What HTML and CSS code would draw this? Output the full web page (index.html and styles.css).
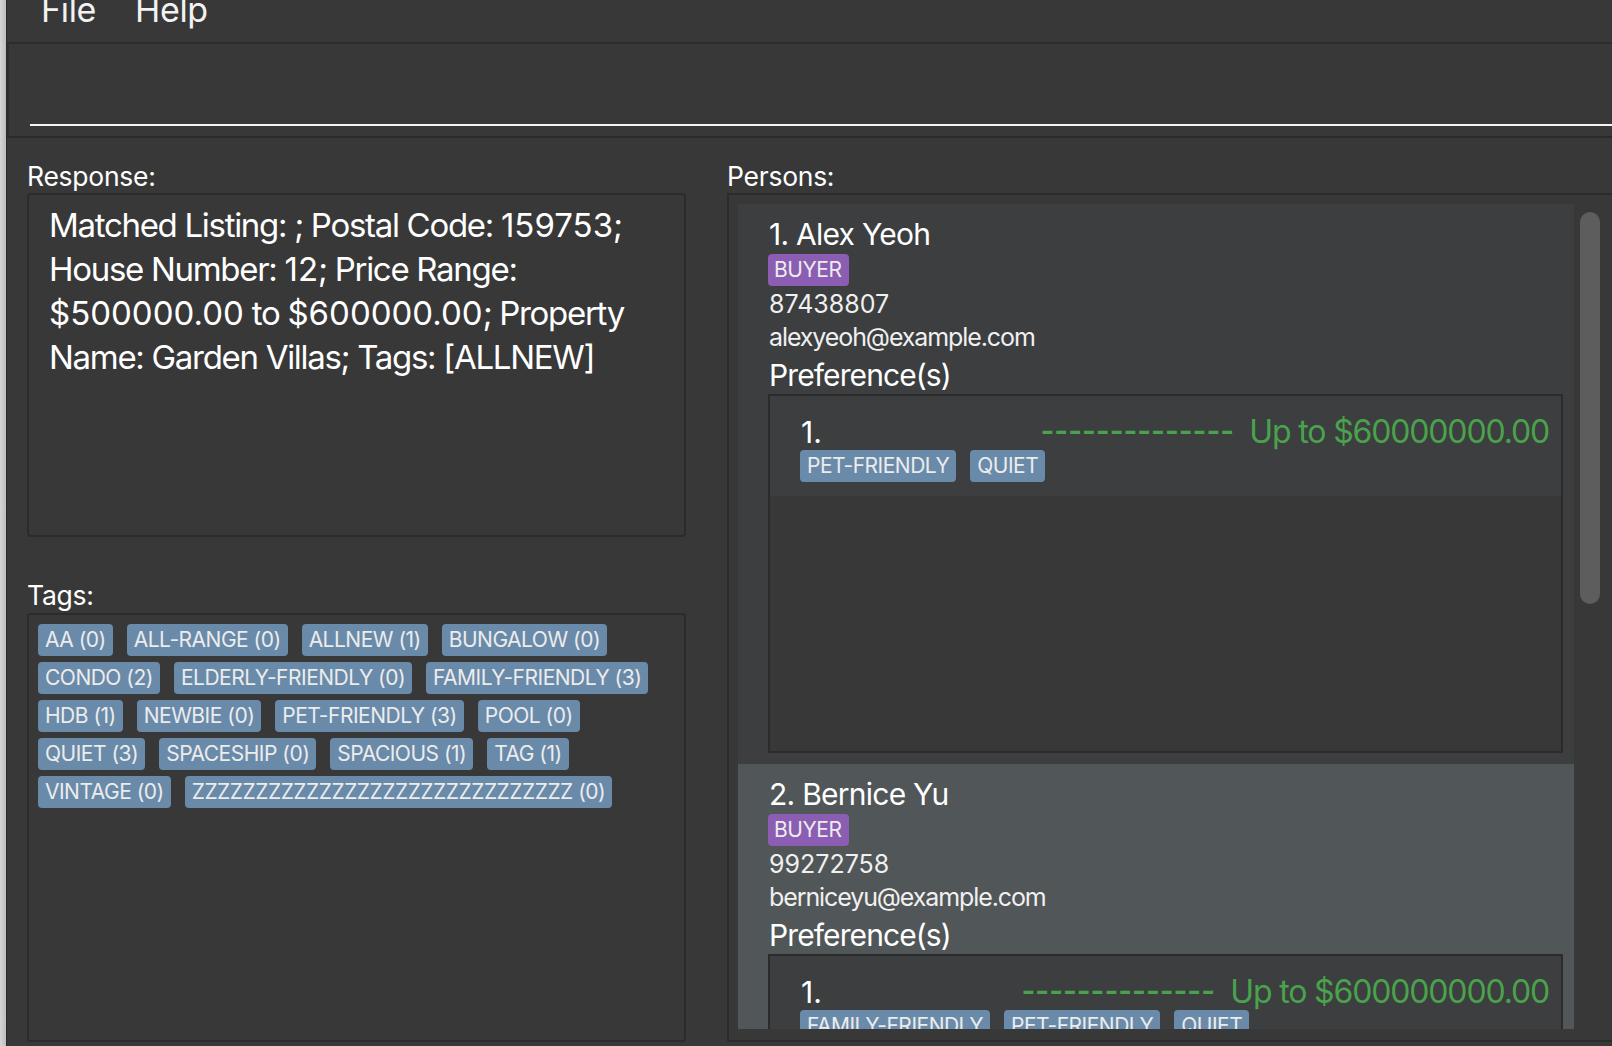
FILE: index.html
```html
<!DOCTYPE html>
<html lang="en">
<head>
<meta charset="utf-8">
<title>Address Book</title>
<link rel="stylesheet" href="styles.css">
</head>
<body>
<div class="app">
  <div class="edge"></div>
  <div class="window">
    <div class="menubar">
      <span class="menu-item">File</span>
      <span class="menu-item">Help</span>
    </div>
    <div class="command">
      <div class="command-input"></div>
    </div>
    <div class="main">
      <div class="left">
        <div class="pane-label">Response:</div>
        <div class="result-box">
          <div class="result-text">Matched Listing: ; Postal Code: <span class="num">159753</span>;<br>House Number: <span class="num">12</span>; Price Range:<br><span class="num">$500000.00</span> to <span class="num">$600000.00</span>; Property<br>Name: Garden Villas; Tags: [ALLNEW]</div>
        </div>
        <div class="pane-label tags-label">Tags:</div>
        <div class="tags-box">
          <div class="tag-row">
            <span class="chip">AA (0)</span>
            <span class="chip">ALL-RANGE (0)</span>
            <span class="chip">ALLNEW (1)</span>
            <span class="chip">BUNGALOW (0)</span>
          </div>
          <div class="tag-row">
            <span class="chip">CONDO (2)</span>
            <span class="chip">ELDERLY-FRIENDLY (0)</span>
            <span class="chip">FAMILY-FRIENDLY (3)</span>
          </div>
          <div class="tag-row">
            <span class="chip">HDB (1)</span>
            <span class="chip">NEWBIE (0)</span>
            <span class="chip">PET-FRIENDLY (3)</span>
            <span class="chip">POOL (0)</span>
          </div>
          <div class="tag-row">
            <span class="chip">QUIET (3)</span>
            <span class="chip">SPACESHIP (0)</span>
            <span class="chip">SPACIOUS (1)</span>
            <span class="chip">TAG (1)</span>
          </div>
          <div class="tag-row">
            <span class="chip">VINTAGE (0)</span>
            <span class="chip">ZZZZZZZZZZZZZZZZZZZZZZZZZZZZZZ (0)</span>
          </div>
        </div>
      </div>
      <div class="right">
        <div class="pane-label">Persons:</div>
        <div class="list-box">
          <div class="list-viewport">
            <div class="card card-even">
              <div class="card-name">1. Alex Yeoh</div>
              <div class="card-role"><span class="chip chip-buyer">BUYER</span></div>
              <div class="card-line card-phone">87438807</div>
              <div class="card-line card-email">alexyeoh@example.com</div>
              <div class="card-pref-label">Preference(s)</div>
              <div class="pref-box">
                <div class="pref-row">
                  <div class="pref-top">
                    <span class="pref-index">1.</span>
                    <span class="pref-price-group"><span class="pref-dashes">--------------</span><span class="pref-price">Up to $60000000.00</span></span>
                  </div>
                  <div class="pref-tags">
                    <span class="chip">PET-FRIENDLY</span>
                    <span class="chip">QUIET</span>
                  </div>
                </div>
              </div>
            </div>
            <div class="card card-odd">
              <div class="card-name">2. Bernice Yu</div>
              <div class="card-role"><span class="chip chip-buyer">BUYER</span></div>
              <div class="card-line card-phone">99272758</div>
              <div class="card-line card-email">berniceyu@example.com</div>
              <div class="card-pref-label">Preference(s)</div>
              <div class="pref-box">
                <div class="pref-row">
                  <div class="pref-top">
                    <span class="pref-index">1.</span>
                    <span class="pref-price-group"><span class="pref-dashes">--------------</span><span class="pref-price">Up to $600000000.00</span></span>
                  </div>
                  <div class="pref-tags">
                    <span class="chip">FAMILY-FRIENDLY</span>
                    <span class="chip">PET-FRIENDLY</span>
                    <span class="chip">QUIET</span>
                  </div>
                </div>
              </div>
            </div>
          </div>
          <div class="scrollbar"><div class="scroll-thumb"></div></div>
        </div>
      </div>
    </div>
  </div>
</div>
</body>
</html>
```

FILE: styles.css
```css
html, body {
  margin: 0;
  padding: 0;
  width: 1612px;
  height: 1046px;
  overflow: hidden;
  background: #383838;
  font-family: Inter, Roboto, "Liberation Sans", sans-serif;
  color: #ffffff;
}

.app {
  display: flex;
  width: 1612px;
  height: 1046px;
}

.edge {
  width: 6px;
  flex-shrink: 0;
  background: linear-gradient(to right, #d6d6d6, #bdbdbd);
}

.window {
  flex: 1;
  display: flex;
  flex-direction: column;
  border-left: 1px solid #2b2b2b;
  min-width: 0;
  overflow: hidden;
}

.menubar {
  height: 44px;
  box-sizing: border-box;
  border-bottom: 2px solid #2c2c2c;
  display: flex;
  gap: 39px;
  padding-left: 34px;
  flex-shrink: 0;
}

.menu-item {
  font-size: 34px;
  line-height: 34px;
  margin-top: -7px;
  letter-spacing: -0.01em;
  color: #f2f2f2;
}

.command {
  height: 94px;
  box-sizing: border-box;
  border-left: 2px solid #2e2e2e;
  border-bottom: 2px solid #2b2b2b;
  flex-shrink: 0;
}

.command-input {
  height: 82px;
  box-sizing: border-box;
  margin-left: 21px;
  border-bottom: 2px solid #f4f4f4;
}

.main {
  flex: 1;
  display: flex;
  gap: 41px;
  padding: 21px 0 0 20px;
  overflow: hidden;
}

.left {
  width: 659px;
  flex-shrink: 0;
  display: flex;
  flex-direction: column;
}

.right {
  width: 892px;
  flex-shrink: 0;
  display: flex;
  flex-direction: column;
}

.pane-label {
  height: 34px;
  font-size: 26.5px;
  line-height: 34px;
  letter-spacing: -0.01em;
  color: #ffffff;
}

.tags-label {
  margin-top: 41px;
  height: 35px;
}

.result-box {
  height: 344px;
  box-sizing: border-box;
  border: 2px solid #2b2b2b;
  border-radius: 4px;
  padding: 8px 20px;
}

.result-text {
  font-size: 33px;
  line-height: 44px;
  letter-spacing: -1.3px;
  color: #ffffff;
}

.result-text .num {
  letter-spacing: 0;
}

.tags-box {
  height: 429px;
  box-sizing: border-box;
  border: 2px solid #2b2b2b;
  border-radius: 3px;
  padding: 9px 9px;
  display: flex;
  flex-direction: column;
  gap: 6px;
}

.tag-row {
  display: flex;
  gap: 14px;
}

.chip {
  display: inline-block;
  height: 32px;
  line-height: 32px;
  padding: 0 7px;
  border-radius: 4px;
  background: #6a8aaa;
  color: #ececec;
  font-size: 21px;
  letter-spacing: -0.024em;
  white-space: nowrap;
}

.chip-buyer {
  background: #8b5db3;
  padding: 0 7px 0 6px;
  letter-spacing: -0.02em;
}

.list-box {
  height: 849px;
  box-sizing: border-box;
  border: 2px solid #2b2b2b;
  border-right: none;
  padding: 9px 0 11px 9px;
  display: flex;
}

.list-viewport {
  width: 836px;
  flex-shrink: 0;
  overflow: hidden;
}

.scrollbar {
  flex: 1;
  padding: 8px 0 0 6px;
}

.scroll-thumb {
  width: 20px;
  height: 392px;
  border-radius: 10px;
  background: #5d5d5d;
}

.card {
  height: 560px;
  box-sizing: border-box;
  padding: 10px 11px 11px 31px;
  display: flex;
  flex-direction: column;
}

.card-even {
  background: #3c3e3f;
}

.card-odd {
  background: #515658;
}

.card-name {
  height: 40px;
  font-size: 30px;
  line-height: 40px;
  letter-spacing: -0.025em;
  color: #ffffff;
}

.card-role {
  height: 32px;
  display: flex;
  margin-left: -1px;
}

.card-line {
  height: 32px;
  font-size: 25px;
  line-height: 32px;
  letter-spacing: -1.1px;
  color: #f0f0f0;
}

.card-phone {
  margin-top: 2px;
  letter-spacing: 0;
}

.card-email {
  margin-top: 1px;
}

.card-pref-label {
  margin-top: 3px;
  height: 38px;
  font-size: 30px;
  line-height: 38px;
  letter-spacing: -0.03em;
  color: #ffffff;
}

.pref-box {
  height: 359px;
  box-sizing: border-box;
  border: 2px solid #2b2b2b;
  margin-left: -1px;
  background: #383838;
  flex-shrink: 0;
}

.pref-row {
  height: 100px;
  box-sizing: border-box;
  background: #3c3e3f;
  padding: 18px 12px 14px 31px;
}

.pref-top {
  height: 36px;
  display: flex;
  align-items: baseline;
  justify-content: space-between;
  line-height: 36px;
}

.pref-index {
  font-size: 30px;
  line-height: 36px;
  color: #ffffff;
}

.pref-price-group {
  display: flex;
  align-items: baseline;
  gap: 15px;
}

.pref-dashes {
  font-family: "Liberation Sans", Arial, sans-serif;
  font-size: 40px;
  line-height: 26px;
  letter-spacing: 0.5px;
  color: #4aa24c;
}

.pref-price {
  font-size: 32px;
  line-height: 32px;
  letter-spacing: -1.15px;
  color: #4aa24c;
}

.pref-tags {
  display: flex;
  gap: 14px;
  margin-left: -1px;
}
```
